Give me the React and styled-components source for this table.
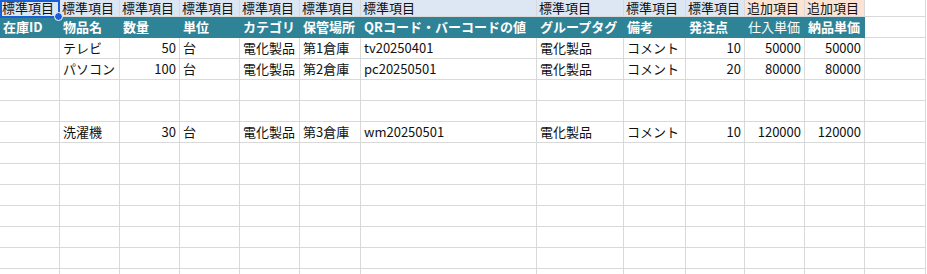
import React from 'react'
import styled, { createGlobalStyle } from 'styled-components'

const Global = createGlobalStyle`
  html, body {
    margin: 0;
    padding: 0;
    background: #fff;
    overflow: hidden;
  }
  body {
    font-family: "Noto Sans CJK JP", "Noto Sans", sans-serif;
  }
`

const widths = [60, 60, 60, 60, 60, 61, 176, 87, 62, 59, 60, 60, 61]

const Sheet = styled.div`
  display: grid;
  grid-template-columns: ${widths.map((w) => w + 'px').join(' ')};
  grid-template-rows: 17px;
  grid-auto-rows: 21px;
  width: 927px;
  height: 274px;
  overflow: hidden;
  position: relative;
`

const Cell = styled.div`
  box-sizing: border-box;
  border-right: 1px solid #d9d9d9;
  border-bottom: 1px solid #d9d9d9;
  background: ${(p) => p.$bg || '#fff'};
  color: ${(p) => p.$color || '#111'};
  font-weight: ${(p) => (p.$bold ? 700 : 400)};
  font-size: 13px;
  line-height: 20px;
  padding: 0 3px;
  text-align: ${(p) => (p.$right ? 'right' : 'left')};
  white-space: nowrap;
  overflow: hidden;
  position: relative;
`

const TopCell = styled(Cell)`
  line-height: 16px;
  overflow: visible;
  padding: 0 2px;
`

const HeadCell = styled(Cell)`
  border-right-color: ${(p) => (p.$bg ? p.$bg : '#d9d9d9')};
  border-bottom-color: ${(p) => (p.$bg ? p.$bg : '#d9d9d9')};
`

const Selected = styled.div`
  position: absolute;
  left: 0;
  top: 0;
  width: 60px;
  height: 18px;
  box-sizing: border-box;
  border: 2px solid #1a5fd6;
  pointer-events: none;
`

const Handle = styled.div`
  position: absolute;
  left: 54px;
  top: 12px;
  width: 7px;
  height: 7px;
  border-radius: 50%;
  background: #1a5fd6;
  border: 1.5px solid #fff;
`

const BLUE = '#dde6f3'
const PEACH = '#fce4d5'
const TEAL = '#2f8396'

const top = [
  ...Array(10).fill(['標準項目', BLUE]),
  ['追加項目', PEACH],
  ['追加項目', PEACH],
  ['', null],
]

const heads = [
  '在庫ID', '物品名', '数量', '単位', 'カテゴリ', '保管場所',
  'QRコード・バーコードの値', 'グループタグ', '備考', '発注点', '仕入単価', '納品単価',
]

const rightCols = [2, 9, 10, 11]

const rows = [
  ['', 'テレビ', '50', '台', '電化製品', '第1倉庫', 'tv20250401', '電化製品', 'コメント', '10', '50000', '50000'],
  ['', 'パソコン', '100', '台', '電化製品', '第2倉庫', 'pc20250501', '電化製品', 'コメント', '20', '80000', '80000'],
  [],
  [],
  ['', '洗濯機', '30', '台', '電化製品', '第3倉庫', 'wm20250501', '電化製品', 'コメント', '10', '120000', '120000'],
  [], [], [], [], [], [], [],
]

export default function App() {
  return (
    <>
      <Global />
      <Sheet>
        {top.map(([t, bg], i) => (
          <TopCell key={'t' + i} $bg={bg}>{t}</TopCell>
        ))}
        {widths.map((_, i) =>
          i < 12 ? (
            <HeadCell key={'h' + i} $bg={TEAL} $color="#fff" $bold={i !== 10}>
              {heads[i]}
            </HeadCell>
          ) : (
            <HeadCell key={'h' + i} />
          )
        )}
        {rows.map((r, ri) =>
          widths.map((_, ci) => (
            <Cell key={ri + '-' + ci} $right={rightCols.includes(ci)}>
              {r[ci] || ''}
            </Cell>
          ))
        )}
        <Selected />
        <Handle />
      </Sheet>
    </>
  )
}
